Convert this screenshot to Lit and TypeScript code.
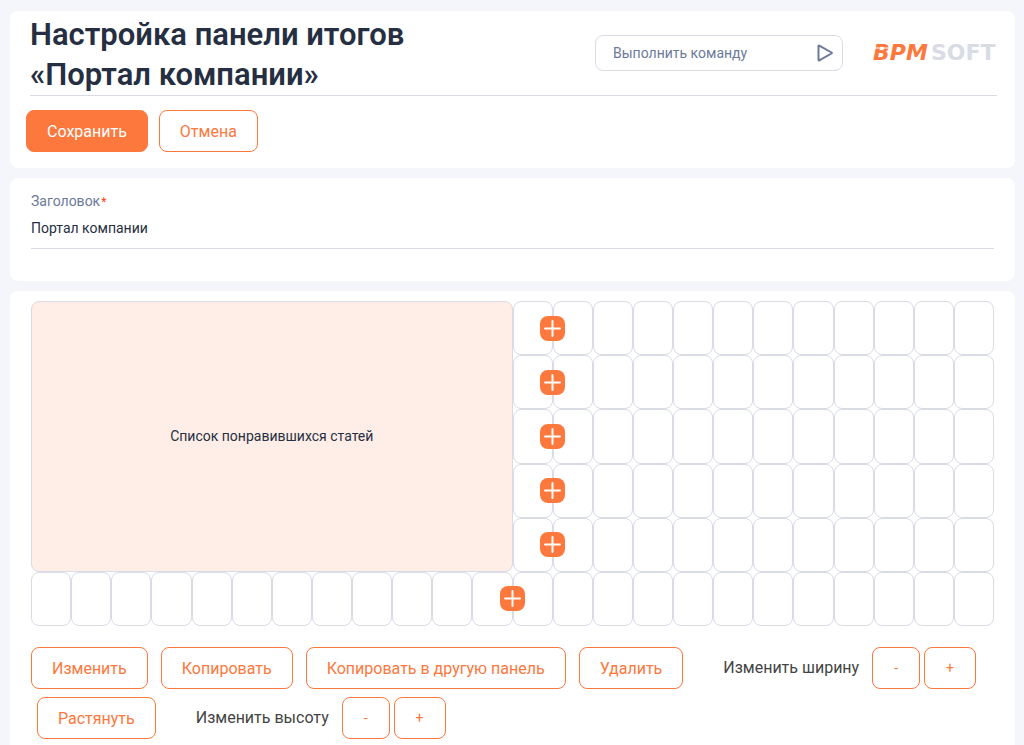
import { LitElement, html, css, svg } from "lit";
import { customElement, property, state } from "lit/decorators.js";
import { styleMap } from "lit/directives/style-map.js";

const COLUMNS = 24;
const ROWS = 6;

interface Slot {
  column: number;
  row: number;
}

@customElement("bpm-logo")
export class BpmLogo extends LitElement {
  static styles = css`
    :host {
      display: block;
    }
    .mark {
      display: block;
      width: 126px;
      height: 30px;
      font: bold 22px "DejaVu Sans", sans-serif;
    }
    .accent {
      fill: #fc783d;
      font-style: oblique;
    }
    .muted {
      fill: #d9dce4;
    }
  `;

  render() {
    return html`
      <svg class="mark" viewBox="0 0 126 30" role="img" aria-label="BPMSOFT">
        <text class="accent" x="2" y="22">BPM</text>
        <text class="muted" x="60" y="22">SOFT</text>
        ${svg`<path d="M0 10H20" stroke="#fff" stroke-width="1" />`}
      </svg>
    `;
  }
}

@customElement("dashboard-grid")
export class DashboardGrid extends LitElement {
  static styles = css`
    :host {
      display: block;
    }
    .grid {
      display: grid;
      grid-template-columns: repeat(24, minmax(0, 1fr));
      grid-template-rows: repeat(6, minmax(0, 1fr));
      height: 325px;
    }
    .cell,
    .widget {
      box-sizing: border-box;
      border: 1px solid #d9dce4;
      border-radius: 8px;
    }
    .widget {
      display: flex;
      align-items: center;
      justify-content: center;
      grid-area: 1 / 1 / span 5 / span 12;
      background: #ffeee8;
      color: #262f42;
      font-size: 14px;
      line-height: 20px;
    }
    .add {
      place-self: center;
      width: 25px;
      height: 25px;
      padding: 0;
      border: 0;
      border-radius: 8px;
      background: #fc783d;
      cursor: pointer;
    }
    .add svg {
      display: block;
    }
  `;

  @property() caption = "";

  private get cells(): Slot[] {
    const result: Slot[] = [];
    for (let row = 1; row <= ROWS; row++) {
      for (let column = row < ROWS ? 13 : 1; column <= COLUMNS; column++) {
        result.push({ column, row });
      }
    }
    return result;
  }

  private get addSlots(): Slot[] {
    return Array.from({ length: ROWS }, (_, i) => ({
      column: i < ROWS - 1 ? 13 : 12,
      row: i + 1,
    }));
  }

  render() {
    return html`
      <div class="grid">
        <div class="widget">${this.caption}</div>
        ${this.cells.map(
          (c) => html`<div class="cell" style=${styleMap({ gridArea: `${c.row} / ${c.column}` })}></div>`
        )}
        ${this.addSlots.map(
          (s) => html`
            <button class="add" aria-label="Добавить" style=${styleMap({ gridArea: `${s.row} / ${s.column} / auto / span 2` })}>
              <svg width="25" height="25" viewBox="0 0 25 25">
                <path d="M12.5 5v15M5 12.5h15" stroke="#fff" stroke-width="2" stroke-linecap="round" />
              </svg>
            </button>
          `
        )}
      </div>
    `;
  }
}

@customElement("app-root")
export class AppRoot extends LitElement {
  static styles = css`
    :host {
      display: block;
      box-sizing: border-box;
      min-height: 100vh;
      background: #f5f6fb;
      color: #262f42;
      font-family: Roboto, "Liberation Sans", sans-serif;
    }
    .page {
      display: flex;
      flex-direction: column;
      gap: 10px;
      box-sizing: border-box;
      min-height: 100vh;
      padding: 11px 9px 0 10px;
    }
    .panel {
      flex: none;
      border-radius: 8px;
      background: #fff;
    }
    .header {
      padding: 4px 18px 16px 16px;
    }
    .top {
      display: flex;
      align-items: flex-start;
      margin-left: 4px;
      border-bottom: 1px solid #d9dce4;
    }
    .title {
      flex: 1;
      max-width: 400px;
      margin: 0;
      font-size: 31px;
      font-weight: 600;
      line-height: 40px;
    }
    .command {
      display: flex;
      align-items: center;
      box-sizing: border-box;
      width: 248px;
      height: 36px;
      margin: 20px 28px 0 auto;
      padding: 0 8px 0 17px;
      border: 1px solid #d9dce4;
      border-radius: 8px;
    }
    .command input {
      flex: 1;
      min-width: 0;
      padding: 0;
      border: 0;
      outline: 0;
      background: none;
      color: #262f42;
      font: 14px Roboto, "Liberation Sans", sans-serif;
    }
    .command input::placeholder {
      color: #6c7a99;
      opacity: 1;
    }
    .run {
      padding: 0;
      border: 0;
      background: none;
      cursor: pointer;
    }
    .run svg {
      display: block;
    }
    .logo {
      margin-top: 23px;
    }
    .actions {
      display: flex;
      gap: 11px;
      margin-top: 14px;
    }
    .button {
      box-sizing: border-box;
      height: 42px;
      padding: 0 20px;
      border: 1px solid #fc783d;
      border-radius: 8px;
      background: #fff;
      color: #fc783d;
      font: 16px Roboto, "Liberation Sans", sans-serif;
      white-space: nowrap;
      cursor: pointer;
    }
    .primary {
      background: #fc783d;
      color: #fff;
    }
    .fields {
      box-sizing: border-box;
      min-height: 103px;
      padding: 13px 21px 0;
    }
    .label {
      display: block;
      color: #6c7a99;
      font-size: 14px;
      line-height: 20px;
    }
    .required {
      margin-left: 1px;
      color: #ff4013;
      font-size: 12px;
    }
    .field {
      display: block;
      box-sizing: border-box;
      width: 100%;
      height: 37px;
      padding: 0 0 4px;
      border: 0;
      border-bottom: 1px solid #d9dce4;
      border-radius: 0;
      outline: 0;
      background: none;
      color: #262f42;
      font: 14px Roboto, "Liberation Sans", sans-serif;
    }
    .board {
      flex: 1 0 auto;
      padding: 10px 21px 6px;
      border-radius: 8px 8px 0 0;
    }
    .toolbar {
      display: flex;
      flex-wrap: wrap;
      align-items: center;
      gap: 8px 13px;
      margin-top: 21px;
    }
    .stretch {
      margin-left: 6px;
    }
    .sizer {
      display: flex;
      align-items: center;
      gap: 4px;
      margin-left: 27px;
    }
    .caption {
      margin-right: 9px;
      color: #444;
      font-size: 16px;
      line-height: 20px;
      white-space: nowrap;
    }
    .step {
      padding: 0 21px;
      font-size: 14px;
    }
  `;

  @state() private heading = "Портал компании";

  private sizer(caption: string) {
    return html`
      <div class="sizer" role="group" aria-label=${caption}>
        <span class="caption">${caption}</span>
        <button class="button step">-</button>
        <button class="button step">+</button>
      </div>
    `;
  }

  render() {
    return html`
      <main class="page">
        <header class="panel header">
          <div class="top">
            <h1 class="title">Настройка панели итогов «Портал компании»</h1>
            <form class="command" @submit=${(e: Event) => e.preventDefault()}>
              <input type="text" aria-label="Выполнить команду" placeholder="Выполнить команду" />
              <button class="run" aria-label="Выполнить">
                <svg width="18" height="18" viewBox="0 0 18 18" fill="none">
                  <path d="M2.5 2.2v13.6q0 .9.8.5l12.2-6.8q.8-.5 0-1L3.3 1.7q-.8-.4-.8.5z" stroke="#6c7a99" stroke-width="2" stroke-linejoin="round" />
                </svg>
              </button>
            </form>
            <bpm-logo class="logo"></bpm-logo>
          </div>
          <div class="actions">
            <button class="button primary">Сохранить</button>
            <button class="button">Отмена</button>
          </div>
        </header>
        <section class="panel fields">
          <label class="label" for="heading">Заголовок<span class="required">*</span></label>
          <input
            class="field"
            id="heading"
            type="text"
            required
            .value=${this.heading}
            @input=${(e: InputEvent) => (this.heading = (e.target as HTMLInputElement).value)}
          />
        </section>
        <section class="panel board">
          <dashboard-grid caption="Список понравившихся статей"></dashboard-grid>
          <div class="toolbar">
            <button class="button">Изменить</button>
            <button class="button">Копировать</button>
            <button class="button">Копировать в другую панель</button>
            <button class="button">Удалить</button>
            ${this.sizer("Изменить ширину")}
            <button class="button stretch">Растянуть</button>
            ${this.sizer("Изменить высоту")}
          </div>
        </section>
      </main>
    `;
  }
}
